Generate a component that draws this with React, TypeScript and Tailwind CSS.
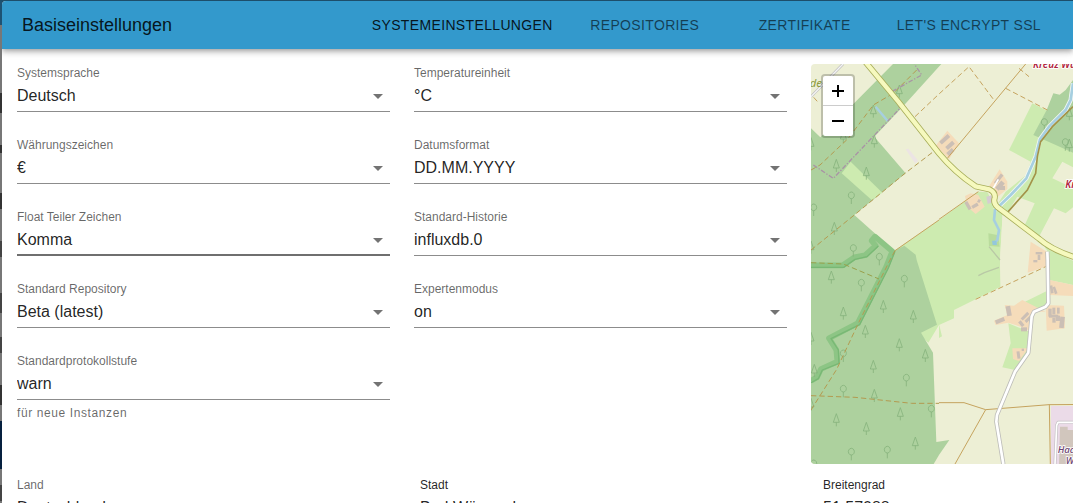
import React, { useState } from "react";

interface Field {
  id: string;
  label: string;
  value: string;
  options: string[];
  helper?: string;
  active?: boolean;
}

const TABS = [
  "Systemeinstellungen",
  "Repositories",
  "Zertifikate",
  "Let's Encrypt SSL",
];

const FIELDS: Field[] = [
  { id: "language", label: "Systemsprache", value: "Deutsch", options: ["Deutsch", "English"] },
  { id: "tempUnit", label: "Temperatureinheit", value: "°C", options: ["°C", "°F"] },
  { id: "currency", label: "Währungszeichen", value: "€", options: ["€", "$"] },
  { id: "dateFormat", label: "Datumsformat", value: "DD.MM.YYYY", options: ["DD.MM.YYYY", "YYYY.MM.DD", "MM/DD/YYYY"] },
  { id: "floatComma", label: "Float Teiler Zeichen", value: "Komma", options: ["Komma", "Punkt"], active: true },
  { id: "history", label: "Standard-Historie", value: "influxdb.0", options: ["influxdb.0"] },
  { id: "repo", label: "Standard Repository", value: "Beta (latest)", options: ["Beta (latest)", "Stable (default)"] },
  { id: "expert", label: "Expertenmodus", value: "on", options: ["on", "off"] },
  { id: "logLevel", label: "Standardprotokollstufe", value: "warn", options: ["warn", "info", "debug", "error"], helper: "für neue Instanzen" },
];

const ADDRESS = [
  { id: "country", label: "Land", value: "Deutschland", muted: true },
  { id: "city", label: "Stadt", value: "Bad Wünnenberg", muted: false },
  { id: "latitude", label: "Breitengrad", value: "51.57088", muted: false },
];

const FIRS = [
  [265, 82], [187, 142], [190, 232], [76, 305], [166, 328], [70, 494], [97, 218], [61, 640], [97, 748],
  [217, 728], [307, 758], [163, 803], [265, 843], [343, 875], [187, 908], [10, 920], [190, 995],
  [268, 1050], [76, 1068], [166, 1094], [313, 1138], [0, 240], [0, 824], [0, 1022], [0, 550], [775, 244], [775, 150],
];
const LEAVES = [
  [121, 396], [8, 432], [127, 554], [205, 580], [151, 658], [280, 646], [97, 870], [286, 943],
  [97, 976], [361, 1036], [121, 1165], [229, 1159], [8, 1200], [700, 176], [763, 236],
];
const BUILDINGS = [
  [384, 220, 34, 12, -42], [403, 238, 28, 12, -42], [407, 258, 22, 12, -42],
  [546, 340, 34, 10, -52], [553, 358, 28, 14, -50], [566, 366, 16, 12, 0],
  [466, 412, 10, 26, -30], [482, 420, 20, 10, -30], [500, 406, 8, 10, 30],
  [586, 726, 14, 30, -10], [553, 764, 28, 12, -22], [628, 752, 28, 9, -45], [640, 760, 26, 9, -45],
  [622, 774, 18, 10, 50], [630, 790, 18, 12, 0], [712, 734, 10, 24, 0], [724, 731, 9, 20, 0],
  [738, 731, 8, 18, 0], [714, 752, 28, 9, 0], [724, 762, 10, 14, 0], [735, 755, 12, 16, 0],
  [746, 758, 14, 34, 6], [618, 862, 9, 22, -8], [632, 854, 7, 7, 0], [674, 564, 20, 7, 0],
  [680, 572, 8, 16, 0], [718, 664, 8, 24, -10], [728, 668, 8, 22, -20], [667, 588, 12, 7, 0],
];

const MapDrawing = () => (
  <svg
    viewBox="0 0 786 1200"
    preserveAspectRatio="xMinYMin slice"
    className="block h-full w-full"
    fill="none"
    aria-hidden="true"
  >
    <rect width="2400" height="1200" fill="#edefd5" />

    {/* meadows */}
    <g fill="#cdebb0">
      <path d="M250 560 384 468 502 383 530 385 549 430 575 448 567 588 569 668 494 706 429 738V763L384 783 352 836 320 806Z" />
      <path d="M664 118 704 138 786 190V310L754 293 724 343 786 372V430L764 448 729 433 684 518 720 560 786 590 786 663 714 648 700 535 639 488 584 448 554 428 584 383 646 333 659 293 594 258Z" />
      <path d="M592 778 629 793 656 803 652 866 612 918 574 910 599 838Z" />
      <path d="M642 713 709 680V728L674 738Z" />
      <path d="M384 780 393 817 384 822Z" />
    </g>
    <path d="M619 398 671 418 639 488 588 448Z" fill="#edefd5" />
    <path d="M532 508 562 514 566 548 534 546Z" fill="#b9dc9c" />
    <path d="M575 448 639 488 684 526 709 560 650 626 569 668 567 588Z" fill="#edefd5" />
    <path d="M659 533 710 565V606L650 626Z" fill="#f5dcba" />

    {/* forest */}
    <path
      d="M0 193 28 220 246 0H391L275 128 190 218 284 328 212 386 130 453 250 560 280 545 314 572 317 588 378 782 330 806 366 866 376 1134 415 1128 384 1173 368 1200H0Z"
      fill="#add19e"
    />
    <path d="M786 48 764 78 746 92 727 88 707 138 667 213 689 223 786 266Z" fill="#add19e" />
    <path d="M92 328 119 293 214 386 182 408Z" fill="#cdebb0" />

    {/* farmyards and industry */}
    <g fill="#f5dcba">
      <path d="M409 200 444 238 414 286 374 245Z" />
      <path d="M566 316 589 353V375L560 398 529 375Z" />
      <path d="M462 396 479 388 502 393 521 428 494 450 469 428Z" />
      <path d="M581 723 609 725 634 708 704 743 669 743 656 800 629 788 592 776 554 783 549 770 589 753Z" />
      <path d="M704 723 759 725 762 793 707 800Z" />
      <path d="M716 648 786 663V696L714 693Z" />
      <path d="M604 853H652L624 891 606 885Z" />
    </g>
    <path d="M720 1026H2400V1200H720Z" fill="#ebdbe8" />
    <path d="M747 1088H770V1098H2400V1200H744Z" fill="#d1c6bd" />
    <g fill="#cbbfb5">
      {BUILDINGS.map(([x, y, w, h, r], i) => (
        <rect key={i} x={x} y={y} width={w} height={h} transform={`rotate(${r} ${x + w / 2} ${y + h / 2})`} />
      ))}
    </g>
    <path d="M284 256 292 254 322 290 312 298Z" fill="#ece4e4" />

    {/* reserve border */}
    <g strokeLinejoin="round">
      <path d="M0 604H95L130 580 162 574 194 545 182 530 192 518 244 562 225 610 140 778 54 823 76 858 79 893 30 915 18 940 0 950" stroke="#8dc585" strokeWidth="17" />
      <path d="M0 610H98L132 586 168 578 202 546M252 562 232 612 146 782 60 824 82 858 84 898 34 918 22 944 0 956" stroke="#78b874" strokeWidth="4" />
    </g>

    {/* tree symbols */}
    <g stroke="#87b37d" strokeWidth="2.5">
      {FIRS.map(([x, y], i) => (
        <path key={i} d={`M${x} ${y - 19}l-9 26h18zM${x} ${y + 7}v12`} />
      ))}
      {LEAVES.map(([x, y], i) => (
        <path key={i} d={`M${x} ${y - 12}a9 10 0 1 0 .1 0zM${x} ${y + 8}v16`} />
      ))}
    </g>

    {/* water */}
    <g stroke="#f2f7f4" strokeWidth="13" strokeLinejoin="round">
      <path d="M786 58 779 108 764 138 714 188 687 226 674 278 646 343 599 393 552 438" />
    </g>
    <g stroke="#a6cfe0" strokeWidth="8" strokeLinejoin="round">
      <path d="M786 58 779 108 764 138 714 188 687 226 674 278 646 343 599 393 552 438 549 468 564 498 559 528 549 538" />
      <path d="M194 128 230 171" strokeWidth="7" />
    </g>
    <path d="M543 530 556 530 558 543 545 543Z" fill="#93c7dc" />

    {/* tracks */}
    <g stroke="#c5a35e" strokeWidth="3">
      <path d="M644 0 409 283M384 466 502 383M384 468 252 560M384 1016H459L524 1037 714 1022 2400 1012M524 1037 432 1200M715 1022 718 1200" />
      <path d="M786 128 724 188 689 233 679 278 674 328 649 378 587 448" stroke="#a39349" strokeWidth="5" />
      <g strokeDasharray="16 9">
        <path d="M0 995 132 1000 302 1018H384M0 1038 77 916 142 778 237 588 252 560" stroke="#b39a50" />
        <path d="M0 558 130 453 282 328 367 263M0 318 27 303 112 223 187 123 247 88 317 18" stroke="#b39a50" />
        <path d="M0 596 97 600 204 645" stroke="#99a04b" />
        <path d="M312 158 384 90 474 8 551 111M584 73 709 138M624 13 654 38M494 706 704 608M8 100 24 118" />
      </g>
    </g>
    <path d="M7 303 67 343 267 133 242 83 332 33 310 0" stroke="#a994a5" strokeWidth="4" strokeDasharray="14 5 4 5" />

    {/* minor roads */}
    <g strokeLinejoin="round">
      <path d="M0 98 96 0" stroke="#bdbdbd" strokeWidth="8" />
      <path d="M0 98 96 0" stroke="#f4f4f4" strokeWidth="4" />
      <path d="M502 635 520 626 564 610M534 548 567 588" stroke="#b9c9a6" strokeWidth="4" />
      <path d="M709 563 710 588 712 718 704 728 669 743 662 758 652 866 612 923 558 1053 556 1073 577 1200" stroke="#bdbdb9" strokeWidth="13" />
      <path d="M709 563 710 588 712 718 704 728 669 743 662 758 652 866 612 923 558 1053 556 1073 577 1200" stroke="#fff" strokeWidth="8" />
      <path d="M2400 1075H741L737 1084 732 1200" stroke="#c4c0c4" strokeWidth="9" />
      <path d="M2400 1075H741L737 1084 732 1200" stroke="#fff" strokeWidth="5" />
      <path d="M526 373 546 374 562 346M546 374 556 390" stroke="#fff" strokeWidth="5" />
    </g>
    <path d="M526 398 542 394 546 414 530 420Z" fill="#d6ccd2" />

    {/* main road */}
    <g strokeLinejoin="round">
      <path d="M160 -10 262 113 384 268Q430 324 494 367L535 376Q554 385 551 402 546 418 560 430L584 448 684 524Q720 556 786 578L2400 900" stroke="#a8ae5b" strokeWidth="18" />
      <path d="M160 -10 262 113 384 268Q430 324 494 367L535 376Q554 385 551 402 546 418 560 430L584 448 684 524Q720 556 786 578L2400 900" stroke="#f6f9be" strokeWidth="13" />
    </g>

    {/* place names */}
    <g fontFamily="'Noto Sans', sans-serif" fontStyle="italic" stroke="#fff" strokeWidth="5" paintOrder="stroke">
      <text x="-4" y="68" fontSize="34" fill="#8b9a3c" strokeWidth="0">de</text>
      <text x="666" y="11" fontSize="30" fontWeight="600" fill="#b0223a">Kreuz Wü</text>
      <text x="763" y="372" fontSize="30" fontWeight="600" fill="#b0223a">Kr</text>
      <text x="740" y="1166" fontSize="29" fontWeight="500" fill="#6d4470">Haa</text>
      <text x="764" y="1200" fontSize="29" fontWeight="500" fill="#6d4470">W</text>
    </g>
  </svg>
);

const MapPanel = () => (
  <section aria-label="Karte" className="relative h-100 overflow-hidden rounded-l">
    <MapDrawing />
    <div className="absolute left-2.5 top-2.5 flex flex-col overflow-hidden rounded border-2 border-black/20 bg-white bg-clip-padding text-black">
      <button type="button" aria-label="Vergrößern" className="flex size-[30px] items-center justify-center border-b border-[#ccc]">
        <svg viewBox="0 0 14 14" className="size-3.5" stroke="currentColor" strokeWidth="2">
          <path d="M1 7h12M7 1v12" />
        </svg>
      </button>
      <button type="button" aria-label="Verkleinern" className="flex size-[30px] items-center justify-center">
        <svg viewBox="0 0 14 14" className="size-3.5" stroke="currentColor" strokeWidth="2">
          <path d="M1 7h12" />
        </svg>
      </button>
    </div>
  </section>
);

const SelectField = ({ field }: { field: Field }) => {
  const [value, setValue] = useState(field.value);

  return (
    <div className="h-18">
      <label htmlFor={field.id} className="block pt-px text-xs leading-4 text-black/60">
        {field.label}
      </label>
      <div
        className={`relative border-b ${
          field.active ? "border-[#6f6f6f] shadow-[inset_0_-1px_0_#6f6f6f]" : "border-[#8c8c8c]"
        }`}
      >
        <select
          id={field.id}
          value={value}
          onChange={(e) => setValue(e.target.value)}
          className="block h-[30px] w-full appearance-none bg-transparent pr-6 text-base text-black/87 outline-none"
        >
          {field.options.map((option) => (
            <option key={option}>{option}</option>
          ))}
        </select>
        <svg viewBox="0 0 24 24" className="pointer-events-none absolute right-0 top-[3px] size-6 fill-black/55">
          <path d="M7 10l5 5 5-5z" />
        </svg>
      </div>
      {field.helper && (
        <p className="pt-[5px] text-xs leading-4 tracking-wider text-black/60">{field.helper}</p>
      )}
    </div>
  );
};

const App = () => {
  const [activeTab, setActiveTab] = useState(TABS[0]);

  return (
    <div className="flex h-screen overflow-hidden bg-[#1d4e6b] pt-px font-['Liberation_Sans',sans-serif]">
      {/* page behind the dialog */}
      <div className="flex w-0.5 shrink-0 flex-col bg-[#777]">
        <div className="h-6 bg-[#1d5273]" />
        <div className="mt-17 h-5 bg-[#333]" />
        <div className="mt-8 h-2 bg-[#333]" />
        <div className="mt-10 h-4 bg-[#333]" />
        <div className="mt-8 h-4 bg-[#444]" />
        <div className="mt-9 h-5 bg-[#444]" />
        <div className="mt-6 h-4 bg-[#444]" />
        <div className="mt-8 h-5 bg-[#333]" />
        <div className="mt-4 h-12 bg-[#06203f]" />
        <div className="mt-4 h-4 bg-[#444]" />
      </div>

      <div className="flex min-w-0 flex-1 flex-col overflow-hidden rounded-tl bg-white">
        <header className="relative flex h-12 shrink-0 items-center justify-between bg-[#3399cc] px-5 shadow-[0_2px_4px_-1px_rgba(0,0,0,0.2),0_4px_5px_0_rgba(0,0,0,0.14),0_1px_10px_0_rgba(0,0,0,0.12)]">
          <h1 className="text-lg text-black/87">Basiseinstellungen</h1>
          <nav className="flex" role="tablist">
            {TABS.map((tab) => (
              <button
                key={tab}
                type="button"
                role="tab"
                aria-selected={tab === activeTab}
                onClick={() => setActiveTab(tab)}
                className={`h-12 min-w-40 whitespace-nowrap px-3 text-sm uppercase tracking-wide ${
                  tab === activeTab ? "text-black/87" : "text-black/60"
                }`}
              >
                {tab}
              </button>
            ))}
          </nav>
        </header>

        <main className="flex-1 overflow-hidden pl-[15px] pt-[15px]">
          <div className="grid grid-cols-[770fr_262fr] gap-6">
            <div className="grid grid-cols-2 content-start gap-x-6">
              {FIELDS.map((field) => (
                <SelectField key={field.id} field={field} />
              ))}
            </div>
            <MapPanel />
          </div>

          <div className="mt-3 grid grid-cols-[379fr_379fr_250fr] gap-6">
            {ADDRESS.map((item) => (
              <div key={item.id}>
                <label
                  htmlFor={item.id}
                  className={`block pt-px text-xs leading-4 ${item.muted ? "text-black/60" : "text-black/87"}`}
                >
                  {item.label}
                </label>
                <input
                  id={item.id}
                  defaultValue={item.value}
                  className="block h-[31px] w-full border-b border-[#8c8c8c] text-base text-black/87 outline-none"
                />
              </div>
            ))}
          </div>
        </main>
      </div>
    </div>
  );
};

export default App;
